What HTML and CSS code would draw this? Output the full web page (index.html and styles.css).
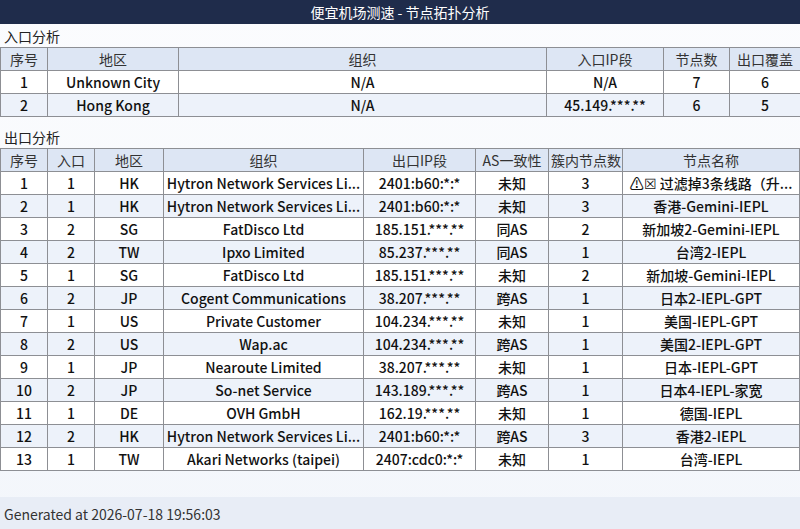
FILE: index.html
```html
<!DOCTYPE html>
<html lang="zh">
<head>
<meta charset="utf-8">
<title>便宜机场测速 - 节点拓扑分析</title>
<link rel="stylesheet" href="styles.css">
</head>
<body>
<div class="page">
  <header class="title">便宜机场测速 - 节点拓扑分析</header>
  <main class="content">
    <div class="section-label">入口分析</div>
    <table class="grid">
      <colgroup>
        <col class="c47"><col class="c131"><col class="c368"><col class="c117"><col class="c66"><col class="c70">
      </colgroup>
      <thead>
        <tr><th>序号</th><th>地区</th><th>组织</th><th>入口IP段</th><th>节点数</th><th>出口覆盖</th></tr>
      </thead>
      <tbody>
        <tr><td>1</td><td>Unknown City</td><td>N/A</td><td>N/A</td><td>7</td><td>6</td></tr>
        <tr><td>2</td><td>Hong Kong</td><td>N/A</td><td>45.149.***.**</td><td>6</td><td>5</td></tr>
      </tbody>
    </table>

    <div class="section-label second">出口分析</div>
    <table class="grid">
      <colgroup>
        <col class="c47"><col class="c47"><col class="c69"><col class="c200"><col class="c112"><col class="c73"><col class="c74"><col>
      </colgroup>
      <thead>
        <tr><th>序号</th><th>入口</th><th>地区</th><th>组织</th><th>出口IP段</th><th>AS一致性</th><th>簇内节点数</th><th>节点名称</th></tr>
      </thead>
      <tbody>
        <tr><td>1</td><td>1</td><td>HK</td><td>Hytron Network Services Li...</td><td>2401:b60:*:*</td><td>未知</td><td>3</td><td>⚠☒ 过滤掉3条线路（升...</td></tr>
        <tr><td>2</td><td>1</td><td>HK</td><td>Hytron Network Services Li...</td><td>2401:b60:*:*</td><td>未知</td><td>3</td><td>香港-Gemini-IEPL</td></tr>
        <tr><td>3</td><td>2</td><td>SG</td><td>FatDisco Ltd</td><td>185.151.***.**</td><td>同AS</td><td>2</td><td>新加坡2-Gemini-IEPL</td></tr>
        <tr><td>4</td><td>2</td><td>TW</td><td>Ipxo Limited</td><td>85.237.***.**</td><td>同AS</td><td>1</td><td>台湾2-IEPL</td></tr>
        <tr><td>5</td><td>1</td><td>SG</td><td>FatDisco Ltd</td><td>185.151.***.**</td><td>未知</td><td>2</td><td>新加坡-Gemini-IEPL</td></tr>
        <tr><td>6</td><td>2</td><td>JP</td><td>Cogent Communications</td><td>38.207.***.**</td><td>跨AS</td><td>1</td><td>日本2-IEPL-GPT</td></tr>
        <tr><td>7</td><td>1</td><td>US</td><td>Private Customer</td><td>104.234.***.**</td><td>未知</td><td>1</td><td>美国-IEPL-GPT</td></tr>
        <tr><td>8</td><td>2</td><td>US</td><td>Wap.ac</td><td>104.234.***.**</td><td>跨AS</td><td>1</td><td>美国2-IEPL-GPT</td></tr>
        <tr><td>9</td><td>1</td><td>JP</td><td>Nearoute Limited</td><td>38.207.***.**</td><td>未知</td><td>1</td><td>日本-IEPL-GPT</td></tr>
        <tr><td>10</td><td>2</td><td>JP</td><td>So-net Service</td><td>143.189.***.**</td><td>跨AS</td><td>1</td><td>日本4-IEPL-家宽</td></tr>
        <tr><td>11</td><td>1</td><td>DE</td><td>OVH GmbH</td><td>162.19.***.**</td><td>未知</td><td>1</td><td>德国-IEPL</td></tr>
        <tr><td>12</td><td>2</td><td>HK</td><td>Hytron Network Services Li...</td><td>2401:b60:*:*</td><td>跨AS</td><td>3</td><td>香港2-IEPL</td></tr>
        <tr><td>13</td><td>1</td><td>TW</td><td>Akari Networks (taipei)</td><td>2407:cdc0:*:*</td><td>未知</td><td>1</td><td>台湾-IEPL</td></tr>
      </tbody>
    </table>
  </main>
  <footer class="footer">Generated at 2026-07-18 19:56:03</footer>
</div>
</body>
</html>
```

FILE: styles.css
```css
* { box-sizing: border-box; }
html, body {
  margin: 0;
  padding: 0;
}
body {
  font-family: "Noto Sans CJK SC", "Noto Sans", sans-serif;
  font-size: 14px;
  color: #111;
  background: #f6f8fc;
}
.page {
  width: 800px;
  height: 529px;
  display: flex;
  flex-direction: column;
  background: linear-gradient(#fbfcfe, #f3f6fb);
}
.title {
  height: 24px;
  line-height: 24px;
  background: #1f2c4b;
  color: #fff;
  text-align: center;
  font-size: 14px;
}
.content {
  flex: 1;
}
.section-label {
  height: 23px;
  line-height: 24px;
  padding-left: 4px;
  font-size: 14px;
  color: #222;
}
.section-label.second {
  margin-top: 8px;
}
.grid {
  width: 800px;
  border-collapse: collapse;
  table-layout: fixed;
}
.grid th, .grid td {
  border: 1px solid #8d8f94;
  height: 23px;
  padding: 0 2px;
  text-align: center;
  white-space: nowrap;
  overflow: hidden;
  font-weight: 500;
  line-height: 20px;
}
.grid th {
  background: #dde6f4;
  color: #333;
  font-weight: 400;
}
.grid tbody tr:nth-child(odd) td { background: #fff; }
.grid tbody tr:nth-child(even) td { background: #edf2fa; }
.c47 { width: 47px; }
.c131 { width: 131px; }
.c368 { width: 368px; }
.c117 { width: 117px; }
.c66 { width: 66px; }
.c70 { width: 71px; }
.c69 { width: 69px; }
.c200 { width: 200px; }
.c112 { width: 112px; }
.c73 { width: 73px; }
.c74 { width: 74px; }
.footer {
  height: 32px;
  line-height: 34px;
  padding-left: 4px;
  background: #e8edf6;
  color: #333;
  font-size: 14px;
}
```
